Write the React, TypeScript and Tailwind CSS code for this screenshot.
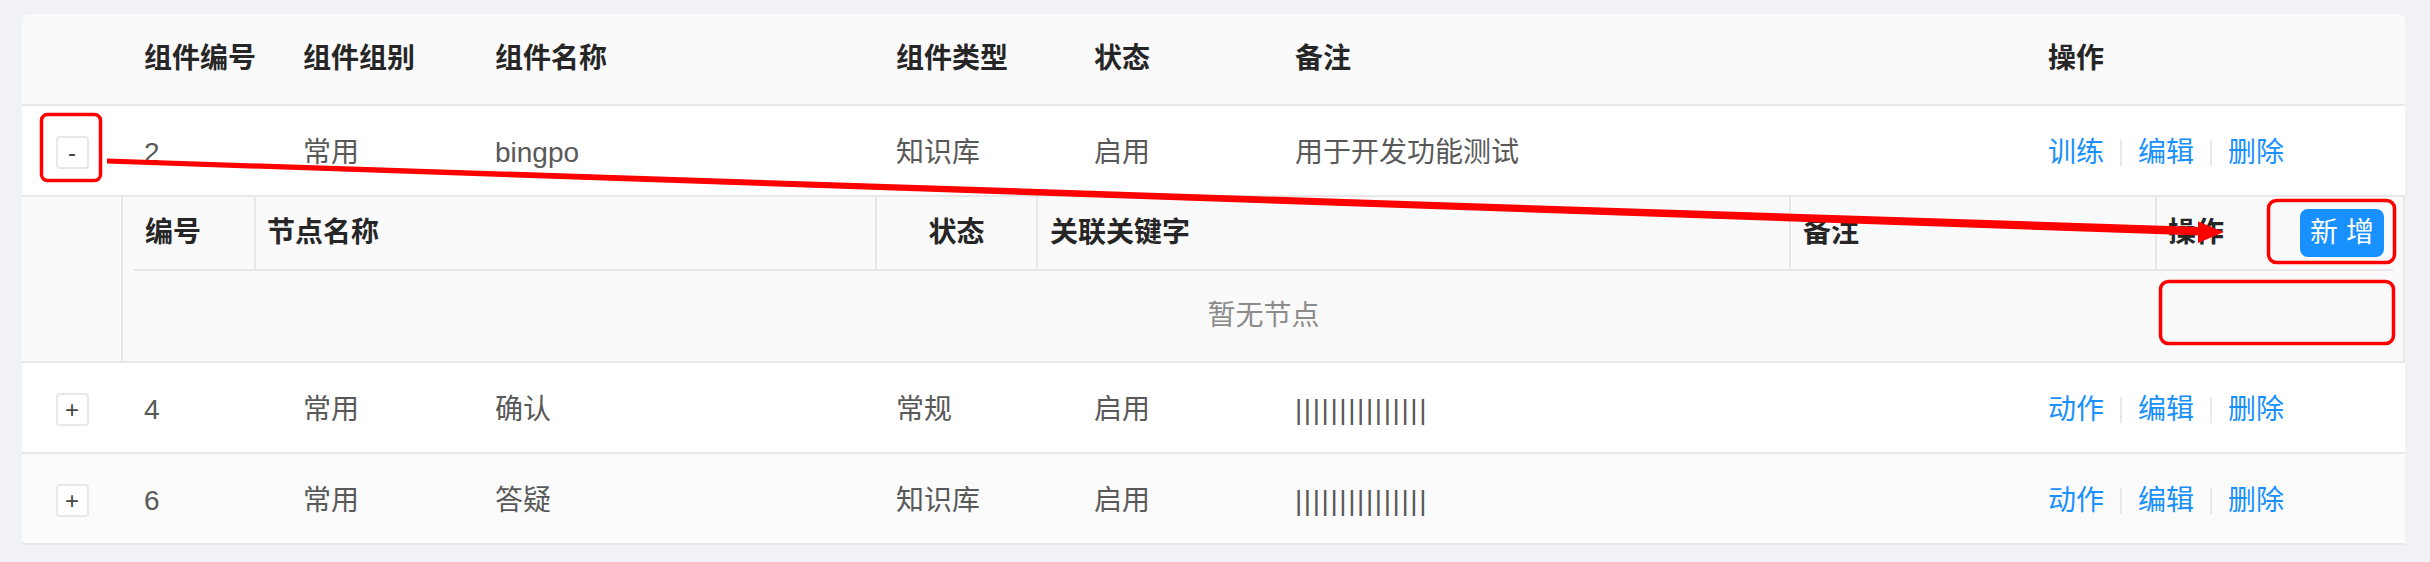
import React from "react";

const rows = [
    { id: "2", group: "常用", name: "bingpo", type: "知识库", status: "启用", note: "用于开发功能测试", action: "训练", open: true, bg: "bg-white" },
    { id: "4", group: "常用", name: "确认", type: "常规", status: "启用", note: "|||||||||||||||", action: "动作", open: false, bg: "bg-white" },
    { id: "6", group: "常用", name: "答疑", type: "知识库", status: "启用", note: "|||||||||||||||", action: "动作", open: false, bg: "bg-[#fbfbfb]" },
];

const ExpandButton = ({ open }: { open: boolean }) => (
    <span className="w-[33px] h-[33px] flex items-center justify-center bg-white border-2 border-[#e8e8e8] rounded-[4px] text-[24px] leading-none text-[#444] select-none">
        {open ? "-" : "+"}
    </span>
);

const Actions = ({ first }: { first: string }) => (
    <div className="flex items-center text-[#1890ff]">
        <span>{first}</span>
        <span className="w-[2px] h-[26px] mx-[16px] bg-[#e8e8e8]" />
        <span>编辑</span>
        <span className="w-[2px] h-[26px] mx-[16px] bg-[#e8e8e8]" />
        <span>删除</span>
    </div>
);

const NodeTable = () => (
    <div className="flex h-[166px] bg-[#fafafa] border-b-2 border-r-2 border-[#e8e8e8]">
        <div className="w-[101px] shrink-0 border-r-2 border-[#e8e8e8]" />
        <div className="flex-1 pl-[11px] pr-[10px] flex flex-col">
            <div className="flex h-[74px] border-b-2 border-[#e8e8e8] text-[#262626] font-semibold">
                <div className="w-[122px] shrink-0 pl-[11px] flex items-center border-r-2 border-[#e8e8e8]">编号</div>
                <div className="w-[621px] shrink-0 pl-[11px] flex items-center border-r-2 border-[#e8e8e8]">节点名称</div>
                <div className="w-[161px] shrink-0 flex items-center justify-center border-r-2 border-[#e8e8e8]">状态</div>
                <div className="w-[753px] shrink-0 pl-[12px] flex items-center border-r-2 border-[#e8e8e8]">关联关键字</div>
                <div className="w-[366px] shrink-0 pl-[12px] flex items-center border-r-2 border-[#e8e8e8]">备注</div>
                <div className="flex-1 pl-[11px] pr-[9px] flex items-center justify-between">
                    <span>操作</span>
                    <button className="w-[84px] h-[48px] rounded-[8px] bg-[#1890ff] text-white font-normal flex items-center justify-center">
                        新 增
                    </button>
                </div>
            </div>
            <div className="flex-1 flex items-center justify-center text-[#8c8c8c]">暂无节点</div>
        </div>
    </div>
);

const Annotations = () => (
    <svg className="absolute inset-0 pointer-events-none" width="2430" height="562" viewBox="0 0 2430 562">
        <rect x="41.5" y="114.5" width="59" height="66" rx="6" fill="none" stroke="#ff0000" strokeWidth="3.5" />
        <polygon points="107,158.5 2200,227 2200,235.5 107,163.5" fill="#ff0000" />
        <polygon points="2198,221.5 2224,232 2198,243" fill="#ff0000" />
        <rect x="2268.5" y="200.5" width="126" height="62" rx="8" fill="none" stroke="#ff0000" strokeWidth="3.5" />
        <rect x="2160.5" y="281.5" width="233" height="62" rx="8" fill="none" stroke="#ff0000" strokeWidth="3.5" />
    </svg>
);

export default function App() {
    return (
        <div className="relative w-full h-[562px] bg-[#f0f2f5] pt-[14px] pl-[22px] font-['Liberation_Sans','Noto_Sans_CJK_SC',sans-serif] text-[28px] text-[#595959]">
            <div className="w-[2383px] bg-white rounded-t-[8px]">
                <div className="flex items-center h-[92px] bg-[#fafafa] rounded-t-[8px] border-b-2 border-[#e8e8e8] text-[#262626] font-semibold">
                    <div className="w-[100px] shrink-0" />
                    <div className="w-[181px] shrink-0 pl-[22px]">组件编号</div>
                    <div className="w-[192px] shrink-0">组件组别</div>
                    <div className="w-[401px] shrink-0">组件名称</div>
                    <div className="w-[198px] shrink-0">组件类型</div>
                    <div className="w-[201px] shrink-0">状态</div>
                    <div className="w-[753px] shrink-0">备注</div>
                    <div>操作</div>
                </div>
                {rows.map((row) => (
                    <React.Fragment key={row.id}>
                        <div className={`flex items-center h-[91px] pt-[4px] border-b-2 border-[#e8e8e8] ${row.bg}`}>
                            <div className="w-[100px] shrink-0 flex justify-center">
                                <ExpandButton open={row.open} />
                            </div>
                            <div className="w-[181px] shrink-0 pl-[22px]">{row.id}</div>
                            <div className="w-[192px] shrink-0">{row.group}</div>
                            <div className="w-[401px] shrink-0">{row.name}</div>
                            <div className="w-[198px] shrink-0">{row.type}</div>
                            <div className="w-[201px] shrink-0">{row.status}</div>
                            <div className={`w-[753px] shrink-0 ${row.open ? "" : "tracking-[1.6px]"}`}>{row.note}</div>
                            <Actions first={row.action} />
                        </div>
                        {row.open && <NodeTable />}
                    </React.Fragment>
                ))}
            </div>
            <Annotations />
        </div>
    );
}
